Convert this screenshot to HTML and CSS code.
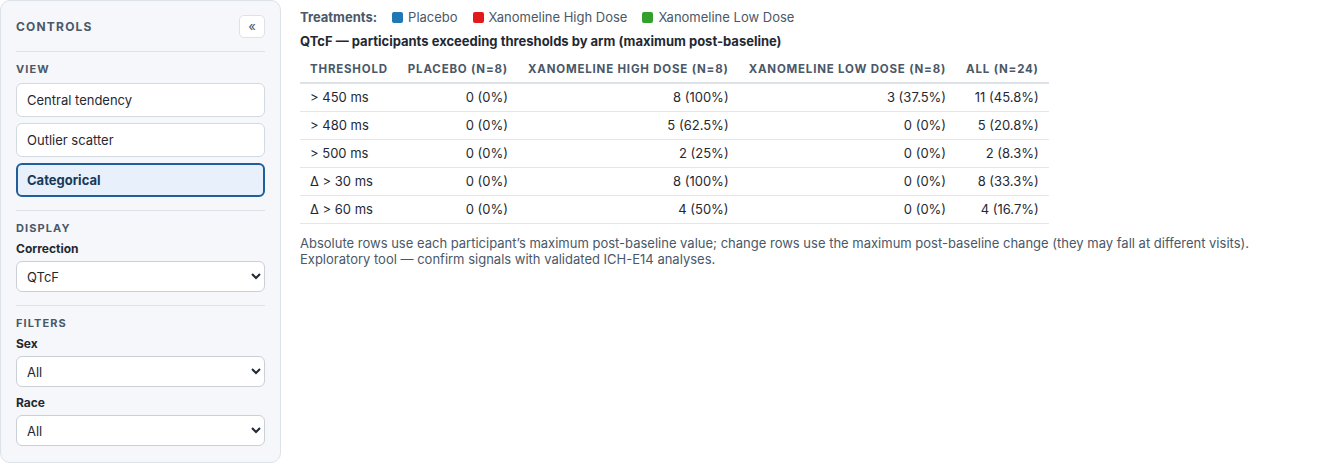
FILE: index.html
```html
<!DOCTYPE html>
<html lang="en">
<head>
    <meta charset="UTF-8">
    <meta name="viewport" content="width=device-width, initial-scale=1.0">
    <title>QTc categorical analysis</title>
    <link rel="stylesheet" href="styles.css">
</head>
<body>

    <aside class="sidebar">
        <div class="sidebar-head">
            <span class="sidebar-title">Controls</span>
            <button class="collapse-btn">&laquo;</button>
        </div>

        <div class="section">
            <div class="section-title">View</div>
            <div class="view-list">
                <button class="view-btn">Central tendency</button>
                <button class="view-btn">Outlier scatter</button>
                <button class="view-btn active">Categorical</button>
            </div>
        </div>

        <div class="section">
            <div class="section-title">Display</div>
            <label class="field-label">Correction</label>
            <select class="field-select">
                <option>QTcF</option>
            </select>
        </div>

        <div class="section">
            <div class="section-title">Filters</div>
            <label class="field-label">Sex</label>
            <select class="field-select">
                <option>All</option>
            </select>
            <label class="field-label">Race</label>
            <select class="field-select">
                <option>All</option>
            </select>
        </div>
    </aside>

    <main class="content">
        <div class="legend">
            <span class="legend-title">Treatments:</span>
            <span class="legend-item"><i class="swatch placebo"></i>Placebo</span>
            <span class="legend-item"><i class="swatch high"></i>Xanomeline High Dose</span>
            <span class="legend-item"><i class="swatch low"></i>Xanomeline Low Dose</span>
        </div>

        <h2 class="table-title">QTcF — participants exceeding thresholds by arm (maximum post-baseline)</h2>

        <table class="cat-table">
            <thead>
                <tr>
                    <th>Threshold</th>
                    <th>Placebo (N=8)</th>
                    <th>Xanomeline High Dose (N=8)</th>
                    <th>Xanomeline Low Dose (N=8)</th>
                    <th>All (N=24)</th>
                </tr>
            </thead>
            <tbody>
                <tr><td>&gt; 450 ms</td><td>0 (0%)</td><td>8 (100%)</td><td>3 (37.5%)</td><td>11 (45.8%)</td></tr>
                <tr><td>&gt; 480 ms</td><td>0 (0%)</td><td>5 (62.5%)</td><td>0 (0%)</td><td>5 (20.8%)</td></tr>
                <tr><td>&gt; 500 ms</td><td>0 (0%)</td><td>2 (25%)</td><td>0 (0%)</td><td>2 (8.3%)</td></tr>
                <tr><td>Δ &gt; 30 ms</td><td>0 (0%)</td><td>8 (100%)</td><td>0 (0%)</td><td>8 (33.3%)</td></tr>
                <tr><td>Δ &gt; 60 ms</td><td>0 (0%)</td><td>4 (50%)</td><td>0 (0%)</td><td>4 (16.7%)</td></tr>
            </tbody>
        </table>

        <p class="note">Absolute rows use each participant’s maximum post-baseline value; change rows use the maximum post-baseline change (they may fall at different visits).<br>Exploratory tool — confirm signals with validated ICH-E14 analyses.</p>
    </main>

</body>
</html>
```

FILE: styles.css
```css
* {
    margin: 0;
    padding: 0;
    box-sizing: border-box;
}

body {
    font-family: Inter, "Liberation Sans", Arial, sans-serif;
    color: #1f2933;
    background-color: #ffffff;
    display: flex;
    align-items: flex-start;
    margin: 0;
}

.sidebar {
    width: 281px;
    height: 463px;
    flex-shrink: 0;
    background-color: #f5f7fa;
    border: 1px solid #dde2e8;
    border-radius: 10px;
    padding: 14px 15px;
}

.sidebar-head {
    display: flex;
    justify-content: space-between;
    align-items: center;
    padding-bottom: 13px;
    border-bottom: 1px solid #dde2e8;
}

.sidebar-title {
    font-size: 12px;
    line-height: 15px;
    font-weight: bold;
    letter-spacing: 0.1em;
    text-transform: uppercase;
    color: #4a5868;
}

.collapse-btn {
    width: 26px;
    height: 23px;
    border: 1px solid #dde2e8;
    border-radius: 5px;
    background-color: #ffffff;
    color: #4a5868;
    font-size: 13px;
    font-family: inherit;
    line-height: 1;
}

.section {
    padding: 10px 0 13px;
    border-bottom: 1px solid #dde2e8;
}

.section:last-child {
    border-bottom: none;
    padding-bottom: 0;
}

.section-title {
    font-size: 11px;
    line-height: 14px;
    font-weight: bold;
    letter-spacing: 0.1em;
    text-transform: uppercase;
    color: #4a5868;
    margin-bottom: 6px;
}

.view-list {
    display: flex;
    flex-direction: column;
    gap: 6px;
    margin-top: 7px;
}

.view-btn {
    height: 34px;
    text-align: left;
    padding: 0 10px;
    font-family: inherit;
    font-size: 13px;
    color: #1f2933;
    background-color: #ffffff;
    border: 1px solid #d3d9e0;
    border-radius: 6px;
}

.view-btn.active {
    background-color: #e8f1fb;
    border: 2px solid #1f5f99;
    padding: 0 9px;
    font-weight: bold;
    color: #17395a;
}

.field-label {
    display: block;
    font-size: 12px;
    line-height: 15px;
    font-weight: bold;
    color: #1f2933;
    margin-bottom: 5px;
}

.field-select + .field-label {
    margin-top: 8px;
}

.field-select {
    display: block;
    width: 100%;
    height: 31px;
    padding: 0 6px;
    font-family: inherit;
    font-size: 13px;
    color: #1f2933;
    background-color: #ffffff;
    border: 1px solid #c9d0d8;
    border-radius: 6px;
}

.content {
    padding: 9px 0 0 19px;
}

.legend {
    display: flex;
    align-items: center;
    gap: 15px;
    font-size: 13px;
    line-height: 16px;
    color: #4a5868;
}

.legend-title {
    font-weight: bold;
}

.legend-item {
    display: flex;
    align-items: center;
    gap: 5px;
}

.swatch {
    display: inline-block;
    width: 11px;
    height: 11px;
    border-radius: 2px;
}

.swatch.placebo { background-color: #1f77b4; }
.swatch.high { background-color: #e31a1c; }
.swatch.low { background-color: #33a02c; }

.table-title {
    font-size: 13px;
    line-height: 16px;
    font-weight: bold;
    color: #1f2933;
    margin-top: 8px;
    margin-bottom: 7px;
}

.cat-table {
    border-collapse: collapse;
    font-size: 13px;
    line-height: 16px;
}

.cat-table th {
    font-size: 11.5px;
    line-height: 14px;
    font-weight: bold;
    letter-spacing: 0.07em;
    text-transform: uppercase;
    color: #4a5868;
    text-align: right;
    padding: 6px 10px;
    border-bottom: 2px solid #dde2e8;
}

.cat-table td {
    text-align: right;
    padding: 0 10px;
    height: 28px;
    border-bottom: 1px solid #e3e7ec;
    color: #1f2933;
}

.cat-table th:first-child,
.cat-table td:first-child {
    text-align: left;
}

.note {
    font-size: 13px;
    line-height: 16px;
    color: #4a5868;
    margin-top: 11px;
}
```
